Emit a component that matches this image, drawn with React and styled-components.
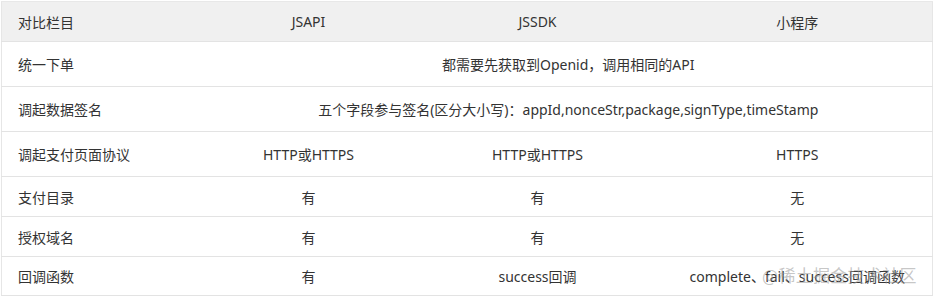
import React from 'react'
import styled, { createGlobalStyle } from 'styled-components'

const GlobalStyle = createGlobalStyle`
  body {
    margin: 0;
    background: #ffffff;
    font-family: 'Noto Sans', 'Noto Sans CJK SC', sans-serif;
  }
`

const Wrapper = styled.div`
  position: relative;
  width: 933px;
  height: 297px;
  padding: 1px 1px 0 1px;
  box-sizing: border-box;
  background: #fff;
`

const Table = styled.table`
  width: 931px;
  border-collapse: collapse;
  table-layout: fixed;
  color: #333;
  font-size: 14px;
  border-left: 1px solid #e6e6e6;
  border-right: 1px solid #e6e6e6;
`

const Col = styled.col`
  width: ${p => p.w}px;
`

const Row = styled.tr`
  height: ${p => p.h}px;
  background: ${p => (p.head ? '#f0f0f0' : '#fff')};
  border-top: 1px solid ${p => (p.head ? '#e8e8e8' : '#e3e3e3')};
  border-bottom: 1px solid #e3e3e3;
`

const Cell = styled.td`
  padding: 0 16px;
  text-align: ${p => (p.left ? 'left' : 'center')};
  vertical-align: middle;
  white-space: nowrap;
`

const Watermark = styled.div`
  position: absolute;
  left: 762px;
  top: 262px;
  font-size: 17px;
  letter-spacing: 0.3px;
  color: rgba(150, 150, 150, 0.55);
  font-family: 'Noto Sans CJK SC', sans-serif;
  pointer-events: none;
`

const widths = [203, 208, 250, 270]

const rows = [
  { h: 40, head: true, cells: ['对比栏目', 'JSAPI', 'JSSDK', '小程序'] },
  { h: 45, span: '都需要先获取到Openid，调用相同的API', cells: ['统一下单'] },
  {
    h: 45,
    span: '五个字段参与签名(区分大小写)：appId,nonceStr,package,signType,timeStamp',
    cells: ['调起数据签名'],
  },
  { h: 45, cells: ['调起支付页面协议', 'HTTP或HTTPS', 'HTTP或HTTPS', 'HTTPS'] },
  { h: 40, cells: ['支付目录', '有', '有', '无'] },
  { h: 40, cells: ['授权域名', '有', '有', '无'] },
  { h: 39, cells: ['回调函数', '有', 'success回调', 'complete、fail、success回调函数'] },
]

const App = () => {
  return (
    <Wrapper>
      <GlobalStyle />
      <Table>
        <colgroup>
          {widths.map((w, i) => (
            <Col key={i} w={w} />
          ))}
        </colgroup>
        <tbody>
          {rows.map((r, i) => (
            <Row key={i} h={r.h} head={r.head}>
              {r.cells.map((c, j) => (
                <Cell key={j} left={j === 0}>
                  {c}
                </Cell>
              ))}
              {r.span && <Cell colSpan={3}>{r.span}</Cell>}
            </Row>
          ))}
        </tbody>
      </Table>
      <Watermark>@稀土掘金技术社区</Watermark>
    </Wrapper>
  )
}

export default App
